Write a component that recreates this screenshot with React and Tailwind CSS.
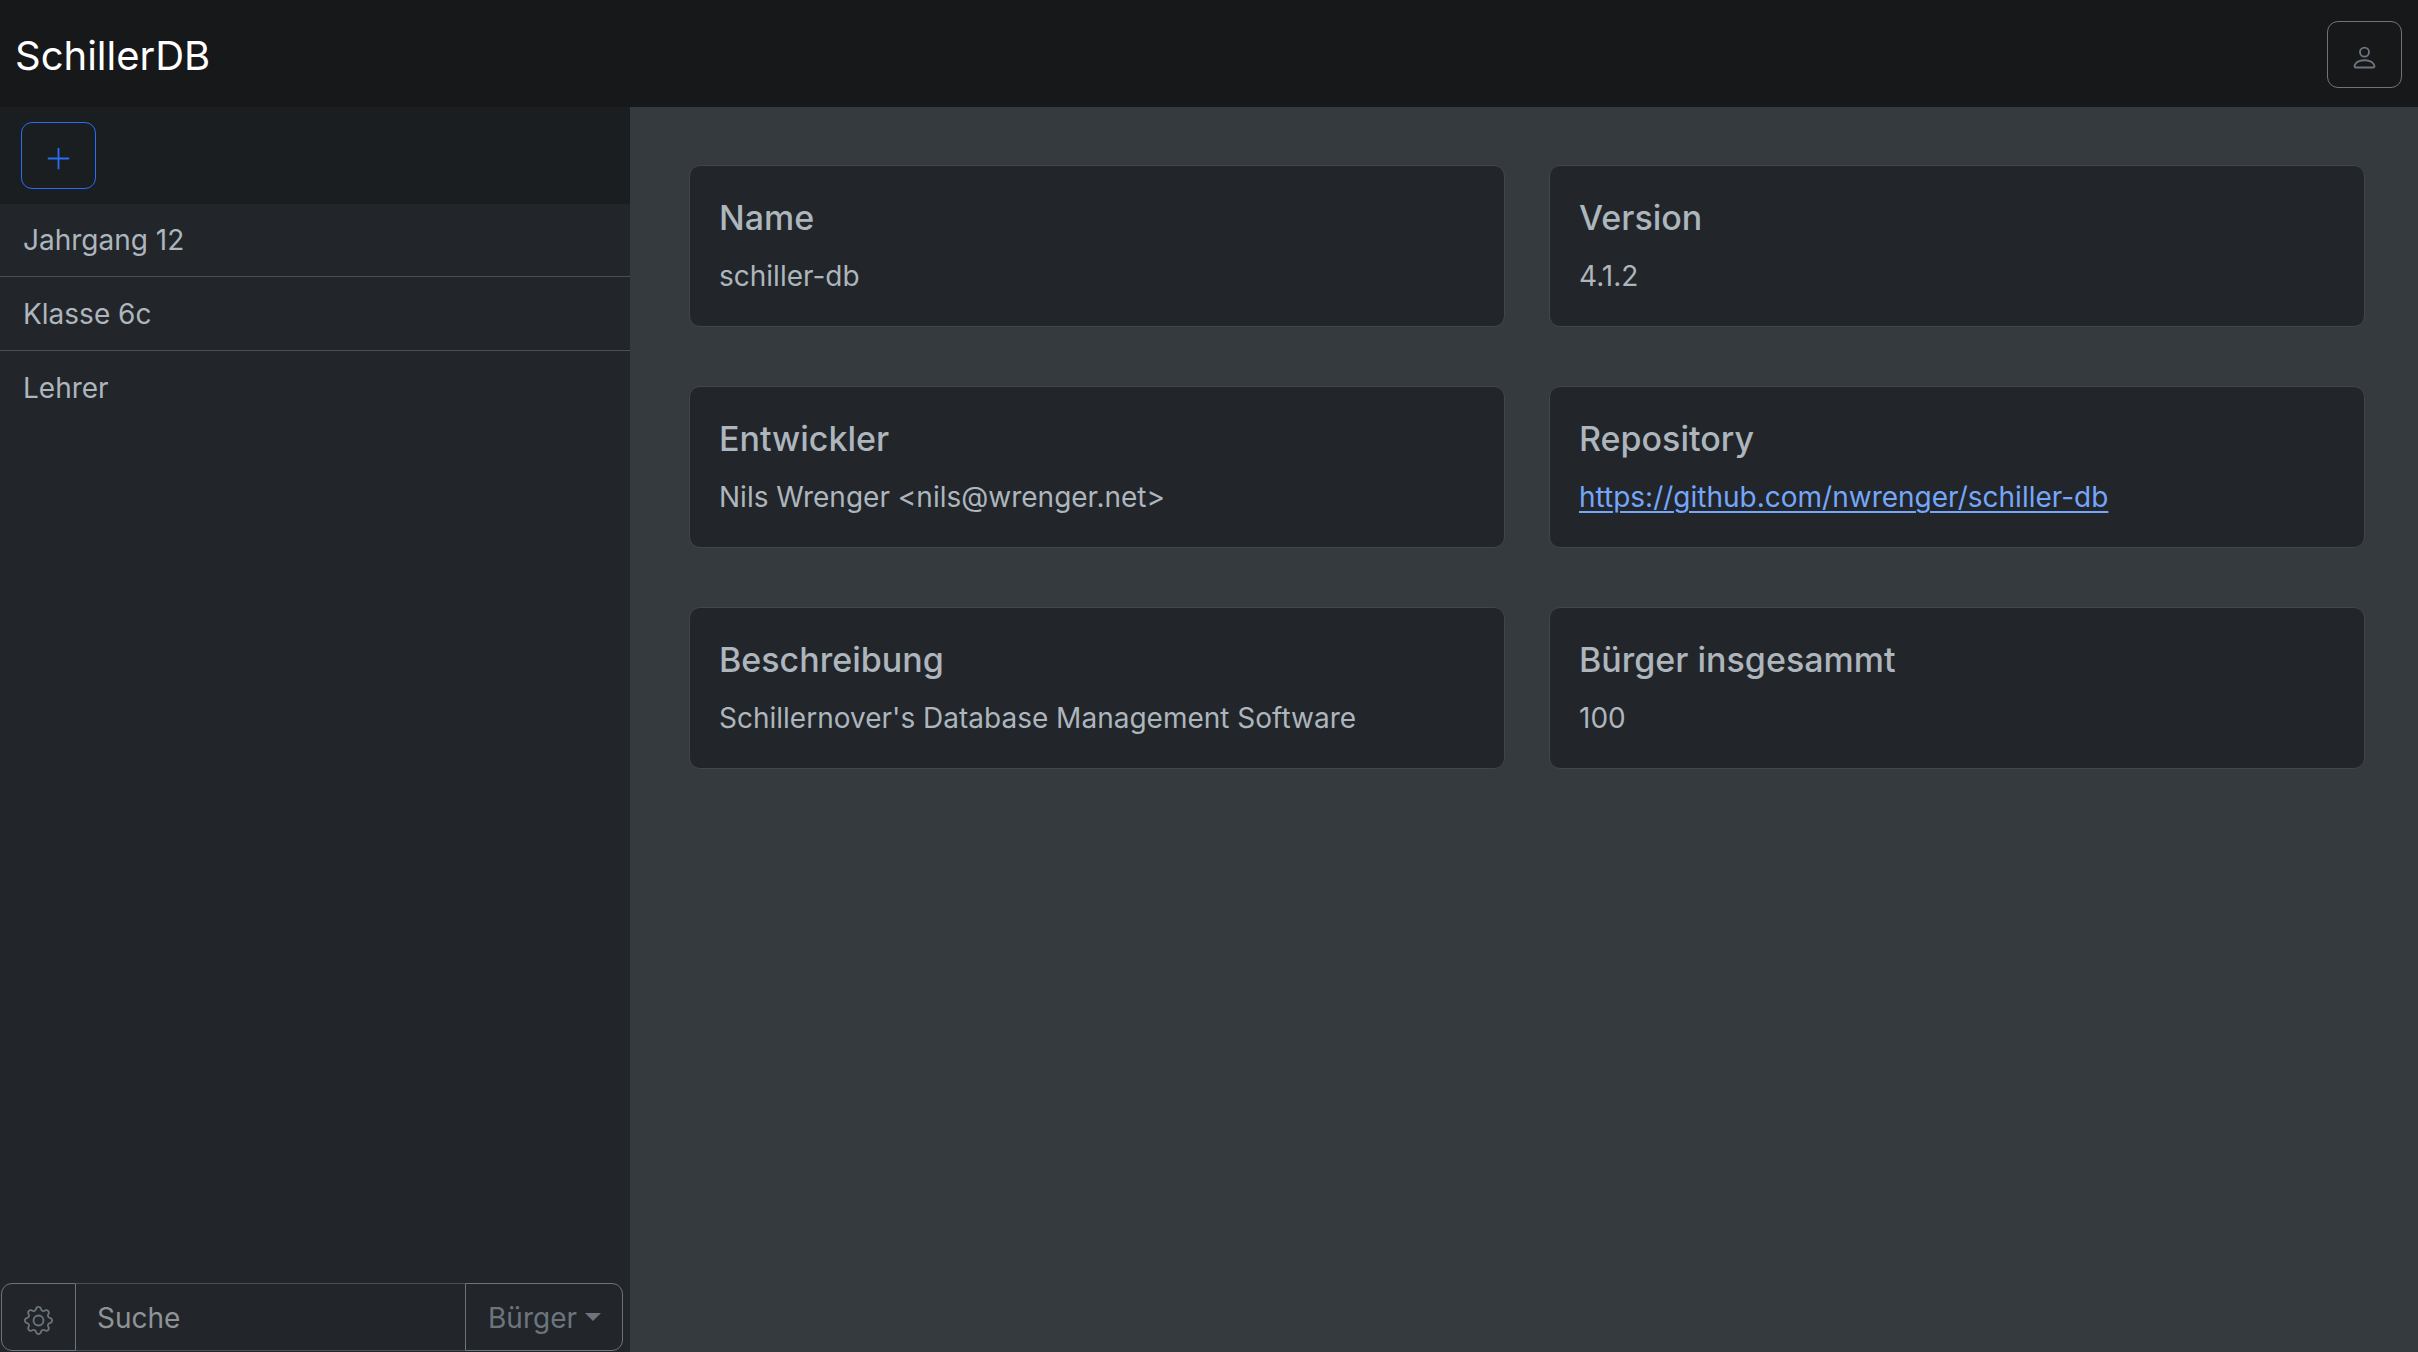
import { useState } from "react";
import { BsGear, BsPerson, BsPlusLg } from "react-icons/bs";

const groups = ["Jahrgang 12", "Klasse 6c", "Lehrer"];

const infos = [
  { title: "Name", text: "schiller-db" },
  { title: "Version", text: "4.1.2" },
  { title: "Entwickler", text: "Nils Wrenger <nils@wrenger.net>" },
  {
    title: "Repository",
    text: "https://github.com/nwrenger/schiller-db",
    href: "https://github.com/nwrenger/schiller-db",
  },
  {
    title: "Beschreibung",
    text: "Schillernover's Database Management Software",
  },
  { title: "Bürger insgesammt", text: "100" },
];

const Navbar = () => (
  <header className="flex h-[107px] shrink-0 items-center justify-between bg-[#17181a] pt-0.5 pr-4 pl-[15px]">
    <h1 className="pt-0.5 text-[40px] leading-[64px] text-white">SchillerDB</h1>
    <button
      type="button"
      aria-label="Konto"
      className="flex h-[67px] w-[75px] items-center justify-center rounded-[11px] border border-[#6c757d] pt-1.5 text-[29px] text-[#6c757d]"
    >
      <BsPerson />
    </button>
  </header>
);

const Sidebar = () => {
  const [search, setSearch] = useState("");
  const [kind, setKind] = useState("Bürger");

  return (
    <aside className="flex w-[630px] shrink-0 flex-col bg-[#22252a]">
      <div className="flex h-[97px] items-center bg-[#1a1e20] px-[21px]">
        <button
          type="button"
          aria-label="Hinzufügen"
          className="flex h-[67px] w-[75px] items-center justify-center rounded-[11px] border border-[#276ef4] pt-1.5 text-[29px] text-[#276ef4]"
        >
          <BsPlusLg />
        </button>
      </div>

      <ul className="-mt-px flex-1 divide-y divide-[#4b5055]">
        {groups.map((group) => (
          <li key={group}>
            <button
              type="button"
              className="block h-[73px] w-full px-[23px] pt-px text-left"
            >
              {group}
            </button>
          </li>
        ))}
      </ul>

      <div className="mr-[7px] mb-px ml-px flex h-[68px]">
        <button
          type="button"
          aria-label="Einstellungen"
          className="flex w-[75px] items-center justify-center rounded-l-[11px] border border-[#6c757d] pt-1.5 text-[29px] text-[#6c757d]"
        >
          <BsGear />
        </button>
        <input
          type="text"
          aria-label="Suche"
          placeholder="Suche"
          value={search}
          onChange={(e) => setSearch(e.target.value)}
          className="min-w-0 flex-1 border-y border-[#4b5055] px-[21px] pt-0.5 outline-none placeholder:text-[#909396]"
        />
        <div className="relative flex">
          <select
            aria-label="Kategorie"
            value={kind}
            onChange={(e) => setKind(e.target.value)}
            className="w-[158px] appearance-none rounded-r-[11px] border border-[#6c757d] bg-[#22252a] pt-0.5 pl-[22px] text-[#6c757d] outline-none"
          >
            <option>Bürger</option>
          </select>
          <svg
            viewBox="0 0 16 8"
            className="pointer-events-none absolute top-[30px] right-[22px] h-2 w-4 fill-[#6c757d]"
          >
            <path d="M0 0h16L8 8z" />
          </svg>
        </div>
      </div>
    </aside>
  );
};

const InfoCard = ({ title, text, href }) => (
  <section className="h-[162px] rounded-[11px] border border-[#424549] bg-[#22252a] px-[29px] pt-[30px]">
    <h2 className="mb-[15px] text-[34px] leading-[43px] font-medium">
      {title}
    </h2>
    {href ? (
      <a
        href={href}
        className="block text-[#74a6f9] underline decoration-2 underline-offset-4"
      >
        {text}
      </a>
    ) : (
      <p>{text}</p>
    )}
  </section>
);

const App = () => {
  return (
    <div className="flex min-h-screen flex-col bg-[#353a3e] font-[Inter,'Liberation_Sans',sans-serif] text-[28px] leading-[44px] text-[#adb5bd]">
      <Navbar />
      <div className="flex flex-1">
        <Sidebar />
        <main className="grid flex-1 grid-cols-2 content-start gap-x-11 gap-y-[59px] py-[58px] pr-[53px] pl-[59px]">
          {infos.map((info) => (
            <InfoCard key={info.title} {...info} />
          ))}
        </main>
      </div>
    </div>
  );
};

export default App;
